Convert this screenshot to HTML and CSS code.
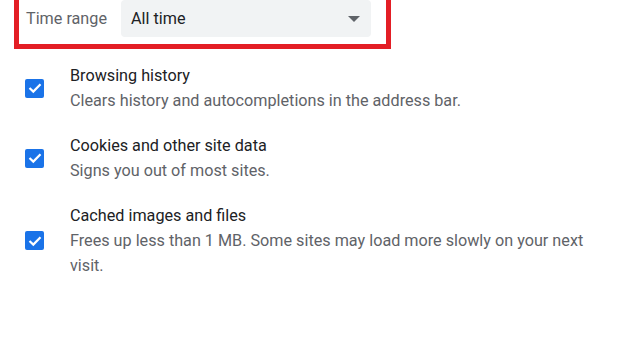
FILE: index.html
```html
<!DOCTYPE html>
<html>
<head lang="en">
  <meta charset="UTF-8">
  <title>Clear browsing data</title>
  <link rel="stylesheet" href="styles.css">
</head>
<body>
<div class="range-box">
  <label class="range-label">Time range</label>
  <div class="range-select">
    <span>All time</span>
    <span class="range-arrow"></span>
  </div>
</div>

<ul class="data-list">
  <li class="data-item">
    <span class="check"><svg width="14" height="12" viewBox="0 0 14 12"><path d="M1.5 6 L5.3 9.6 L12.5 2.2" fill="none" stroke="#fff" stroke-width="2.2"/></svg></span>
    <div class="data-text">
      <div class="data-title">Browsing history</div>
      <div class="data-desc">Clears history and autocompletions in the address bar.</div>
    </div>
  </li>
  <li class="data-item">
    <span class="check"><svg width="14" height="12" viewBox="0 0 14 12"><path d="M1.5 6 L5.3 9.6 L12.5 2.2" fill="none" stroke="#fff" stroke-width="2.2"/></svg></span>
    <div class="data-text">
      <div class="data-title">Cookies and other site data</div>
      <div class="data-desc">Signs you out of most sites.</div>
    </div>
  </li>
  <li class="data-item">
    <span class="check"><svg width="14" height="12" viewBox="0 0 14 12"><path d="M1.5 6 L5.3 9.6 L12.5 2.2" fill="none" stroke="#fff" stroke-width="2.2"/></svg></span>
    <div class="data-text">
      <div class="data-title">Cached images and files</div>
      <div class="data-desc">Frees up less than 1 MB. Some sites may load more slowly on your next visit.</div>
    </div>
  </li>
</ul>
</body>
</html>
```

FILE: styles.css
```css
body {
  margin: 0;
  background: #ffffff;
  font-family: Roboto, "Liberation Sans", Arial, sans-serif;
  font-size: 16.2px;
  color: #202124;
}

ul, li, div, span {
  padding: 0px;
  margin: 0px;
}

.range-box {
  width: 345px;
  margin: -12px 0 0 14px;
  padding: 7px 15px 7px 7px;
  border: 5px solid #e31e25;
  display: flex;
  align-items: center;
}

.range-label {
  width: 95px;
  color: #5f6368;
}

.range-select {
  flex: 1;
  height: 37px;
  background: #f1f3f4;
  border-radius: 4px;
  display: flex;
  align-items: center;
  justify-content: space-between;
  padding: 0 11px 0 10px;
}

.range-arrow {
  width: 0;
  height: 0;
  border-left: 6px solid transparent;
  border-right: 6px solid transparent;
  border-top: 6px solid #5f6368;
}

.data-list {
  list-style: none;
  margin: 14px 0 0 0;
  padding: 0 0 0 25px;
}

.data-item {
  display: flex;
  align-items: center;
  margin-bottom: 20px;
}

.check {
  width: 19px;
  height: 19px;
  flex: none;
  background: #1a73e8;
  border-radius: 2px;
  display: flex;
  align-items: center;
  justify-content: center;
  margin-right: 26px;
}

.data-text {
  line-height: 25px;
  width: 530px;
}

.data-desc {
  color: #5f6368;
}
```
